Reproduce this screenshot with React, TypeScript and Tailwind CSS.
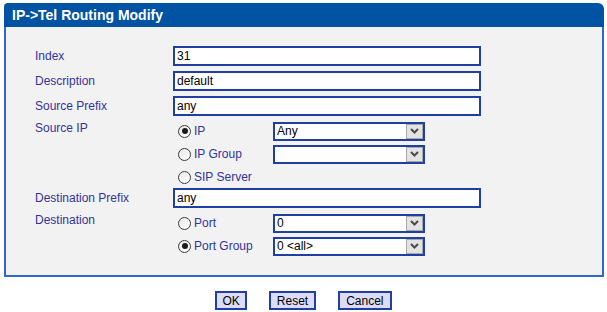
import React from "react";

const font = { fontFamily: '"Liberation Sans", Arial, sans-serif' };

function TextBox({ value }: { value: string }) {
  return (
    <div className="w-[308px] h-[20px] border-2 border-[#1f3fa3] bg-white pl-[2px] flex items-center text-[12px] text-black leading-none">
      {value}
    </div>
  );
}

function Select({ value }: { value: string }) {
  return (
    <div className="w-[152px] h-[19px] border-2 border-[#1f3fa3] bg-white flex items-stretch text-[12px] text-black">
      <div className="flex-1 flex items-center pl-[2px] leading-none">{value}</div>
      <div className="w-[17px] bg-[#e3e3e3] border border-[#a8a8a8] flex items-center justify-center">
        <svg width="9" height="6" viewBox="0 0 9 6">
          <path d="M1 1 L4.5 4.5 L8 1" stroke="#4a4a4a" strokeWidth="2" fill="none" />
        </svg>
      </div>
    </div>
  );
}

function Radio({ checked, label }: { checked?: boolean; label: string }) {
  return (
    <div className="flex items-center w-[100px] pl-[5px]">
      <span className="w-[13px] h-[13px] rounded-full border border-[#3c3c3c] bg-gradient-to-br from-[#e8e8e8] to-white flex items-center justify-center">
        {checked && <span className="w-[6px] h-[6px] rounded-full bg-[#1a1a1a]" />}
      </span>
      <span className="ml-[3px] text-[12px] text-[#333399] leading-none">{label}</span>
    </div>
  );
}

function Label({ text }: { text: string }) {
  return <div className="w-[138px] text-[12px] text-[#333399] leading-[14px]">{text}</div>;
}

function Button({ text, pad }: { text: string; pad: string }) {
  return (
    <div className={`h-[19px] ${pad} border-2 border-[#1f3fa3] bg-[#dcdcf7] text-[12px] text-black flex items-center leading-none`}>
      {text}
    </div>
  );
}

export default function App() {
  return (
    <div className="w-[607px] h-[312px] bg-white pt-[3px] pl-[4px]" style={font}>
      <div className="w-[600px]">
        <div className="h-[24px] bg-[#0052a3] rounded-tl-[4px] rounded-tr-[6px] pl-[8px] flex items-center text-white font-bold text-[14px]">
          IP-&gt;Tel Routing Modify
        </div>
        <div className="h-[250px] bg-[#f2f2f2] border-2 border-t-0 border-[#2f68cc] pl-[29px] pt-[19px] flex flex-col">
          <div className="flex items-center h-[20px]">
            <Label text="Index" />
            <TextBox value="31" />
          </div>
          <div className="flex items-center h-[20px] mt-[5px]">
            <Label text="Description" />
            <TextBox value="default" />
          </div>
          <div className="flex items-center h-[20px] mt-[5px]">
            <Label text="Source Prefix" />
            <TextBox value="any" />
          </div>
          <div className="flex mt-[5px]">
            <Label text="Source IP" />
            <div className="flex flex-col">
              <div className="flex items-center h-[20px]">
                <Radio checked label="IP" />
                <Select value="Any" />
              </div>
              <div className="flex items-center h-[20px] mt-[3px]">
                <Radio label="IP Group" />
                <Select value="" />
              </div>
              <div className="flex items-center h-[20px] mt-[3px]">
                <Radio label="SIP Server" />
              </div>
            </div>
          </div>
          <div className="flex items-center h-[20px] mt-[1px]">
            <Label text="Destination Prefix" />
            <TextBox value="any" />
          </div>
          <div className="flex mt-[5px]">
            <Label text="Destination" />
            <div className="flex flex-col">
              <div className="flex items-center h-[20px]">
                <Radio label="Port" />
                <Select value="0" />
              </div>
              <div className="flex items-center h-[20px] mt-[3px]">
                <Radio checked label="Port Group" />
                <Select value="0 <all>" />
              </div>
            </div>
          </div>
        </div>
      </div>
      <div className="flex justify-center gap-[22px] mt-[14px] pr-[4px]">
        <Button text="OK" pad="px-[5px]" />
        <Button text="Reset" pad="px-[6px]" />
        <Button text="Cancel" pad="px-[6px]" />
      </div>
    </div>
  );
}
